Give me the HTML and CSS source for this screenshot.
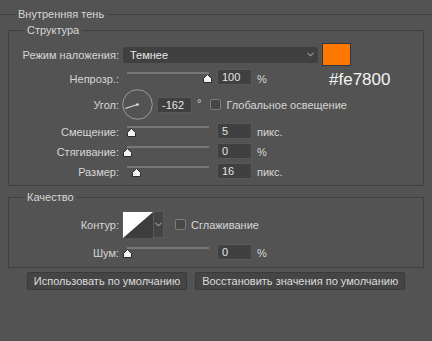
FILE: index.html
```html
<!DOCTYPE html>
<html lang="ru">
<head>
<meta charset="utf-8">
<link rel="stylesheet" href="styles.css">
</head>
<body>
<div class="panel">
  <div class="panel-title"><span>Внутренняя тень</span></div>

  <section class="group">
    <div class="group-title">Структура</div>
    <div class="rows">
      <div class="row row-tall">
        <span class="lbl">Режим наложения:</span>
        <div class="select"><span>Темнее</span>
          <svg class="chev" width="7" height="5" viewBox="0 0 7 5"><polyline points="0.5,0.8 3.5,3.8 6.5,0.8" fill="none" stroke="#9a9a9a" stroke-width="1.1"/></svg>
        </div>
        <div class="swatch"></div>
      </div>

      <div class="row">
        <span class="lbl">Непрозр.:</span>
        <div class="slider"><span class="thumb" style="left:98%"><svg width="9" height="9" viewBox="0 0 9 9"><polygon points="4.5,0.5 8.5,4.5 8.5,8.5 0.5,8.5 0.5,4.5" fill="#f2f2f2" stroke="#2a2a2a" stroke-width="1"/></svg></span></div>
        <div class="field">100</div>
        <span class="unit">%</span>
        <span class="hex">#fe7800</span>
      </div>

      <div class="row row-dial">
        <span class="lbl">Угол:</span>
        <div class="inline">
          <svg class="dial" width="31" height="31" viewBox="0 0 31 31">
            <circle cx="15.5" cy="15.5" r="14.8" fill="none" stroke="#9c9c9c" stroke-width="1"/>
            <line x1="15.5" y1="15.5" x2="3.2" y2="19.5" stroke="#dcdcdc" stroke-width="1.1"/>
            <circle cx="15.5" cy="15.5" r="1.3" fill="#e6e6e6"/>
          </svg>
          <div class="field field-gap">-162</div>
          <span class="deg">°</span>
          <span class="check"></span>
          <span class="check-label">Глобальное освещение</span>
        </div>
      </div>

      <div class="row">
        <span class="lbl">Смещение:</span>
        <div class="slider"><span class="thumb" style="left:5%"><svg width="9" height="9" viewBox="0 0 9 9"><polygon points="4.5,0.5 8.5,4.5 8.5,8.5 0.5,8.5 0.5,4.5" fill="#f2f2f2" stroke="#2a2a2a" stroke-width="1"/></svg></span></div>
        <div class="field">5</div>
        <span class="unit">пикс.</span>
      </div>

      <div class="row">
        <span class="lbl">Стягивание:</span>
        <div class="slider"><span class="thumb" style="left:0%"><svg width="9" height="9" viewBox="0 0 9 9"><polygon points="4.5,0.5 8.5,4.5 8.5,8.5 0.5,8.5 0.5,4.5" fill="#f2f2f2" stroke="#2a2a2a" stroke-width="1"/></svg></span></div>
        <div class="field">0</div>
        <span class="unit">%</span>
      </div>

      <div class="row">
        <span class="lbl">Размер:</span>
        <div class="slider"><span class="thumb" style="left:11%"><svg width="9" height="9" viewBox="0 0 9 9"><polygon points="4.5,0.5 8.5,4.5 8.5,8.5 0.5,8.5 0.5,4.5" fill="#f2f2f2" stroke="#2a2a2a" stroke-width="1"/></svg></span></div>
        <div class="field">16</div>
        <span class="unit">пикс.</span>
      </div>
    </div>
  </section>

  <section class="group group-quality">
    <div class="group-title">Качество</div>
    <div class="rows rows-quality">
      <div class="row row-contour">
        <span class="lbl">Контур:</span>
        <div class="inline">
          <div class="contour">
            <svg class="contour-img" width="30" height="26" viewBox="0 0 30 26">
              <rect width="30" height="26" fill="#3d3d3d"/>
              <polygon points="0,0 30,0 0,26" fill="#ffffff"/>
            </svg>
            <div class="contour-drop">
              <svg width="7" height="5" viewBox="0 0 7 5"><polyline points="0.5,0.8 3.5,3.8 6.5,0.8" fill="none" stroke="#9a9a9a" stroke-width="1.1"/></svg>
            </div>
          </div>
          <span class="check check-gap"></span>
          <span class="check-label">Сглаживание</span>
        </div>
      </div>

      <div class="row">
        <span class="lbl">Шум:</span>
        <div class="slider"><span class="thumb" style="left:0%"><svg width="9" height="9" viewBox="0 0 9 9"><polygon points="4.5,0.5 8.5,4.5 8.5,8.5 0.5,8.5 0.5,4.5" fill="#f2f2f2" stroke="#2a2a2a" stroke-width="1"/></svg></span></div>
        <div class="field">0</div>
        <span class="unit">%</span>
      </div>
    </div>
  </section>

  <div class="buttons">
    <button class="btn">Использовать по умолчанию</button>
    <button class="btn">Восстановить значения по умолчанию</button>
  </div>
</div>
</body>
</html>
```

FILE: styles.css
```css
html, body {
  margin: 0;
  padding: 0;
}

body {
  width: 432px;
  height: 341px;
  overflow: hidden;
  background: #535353;
  font-family: "Liberation Sans", Arial, sans-serif;
  font-size: 11px;
  color: #d6d6d6;
}

.panel-title {
  display: flex;
  align-items: center;
  height: 14px;
  margin-top: 7px;
  line-height: 14px;
}

.panel-title::before {
  content: "";
  width: 16px;
  height: 1px;
  margin-right: 2px;
  background: #404040;
}

.panel-title::after {
  content: "";
  flex: 1;
  height: 1px;
  margin-left: 3px;
  background: #404040;
}

.group {
  margin: 9px 8px 0;
  border: 1px solid #404040;
}

.group-quality {
  margin-top: 11px;
}

.group-title {
  width: max-content;
  margin: -8px 0 0 15px;
  padding: 0 3px;
  line-height: 14px;
  background: #535353;
}

.rows {
  display: flex;
  flex-direction: column;
  gap: 3px;
  margin-top: 6px;
  padding-bottom: 5px;
}

.rows-quality {
  gap: 6px;
  margin-top: 7px;
  padding-bottom: 6px;
}

.row {
  display: grid;
  grid-template-columns: 114px 94px 35px 70px 1fr;
  grid-template-rows: 1fr;
  align-items: center;
  height: 17px;
}

.row-tall {
  height: 23px;
}

.row-dial {
  height: 31px;
}

.row-contour {
  height: 27px;
}

.lbl {
  padding-right: 4px;
  text-align: right;
  white-space: nowrap;
}

.select {
  grid-column: 2 / 5;
  display: flex;
  align-items: center;
  justify-content: space-between;
  height: 16px;
  margin-right: 4px;
  padding: 0 4px 0 7px;
  box-sizing: border-box;
  background: #404040;
  border-radius: 2px;
  color: #e8e8e8;
}

.swatch {
  grid-column: 5;
  width: 29px;
  height: 23px;
  box-sizing: border-box;
  background: #fe7800;
  border: 1px solid #2c3540;
}

.hex {
  grid-column: 5;
  align-self: start;
  margin-top: 2px;
  padding-left: 7px;
  font-size: 17px;
  line-height: 17px;
  color: #f2f2f2;
}

.slider {
  position: relative;
  align-self: start;
  width: 82px;
  height: 2px;
  margin: 3px 0 0 4px;
  background: #777777;
}

.thumb {
  position: absolute;
  top: 2px;
  width: 9px;
  height: 9px;
  margin-left: -4.5px;
}

.thumb svg {
  display: block;
}

.field {
  align-self: start;
  width: 35px;
  height: 16px;
  box-sizing: border-box;
  padding-left: 4px;
  line-height: 14px;
  background: #404040;
  border: 1px solid #585858;
  color: #e4e4e4;
}

.unit {
  padding-left: 5px;
}

.inline {
  grid-column: 2 / 6;
  display: flex;
  align-items: center;
  margin-left: -1px;
}

.dial {
  display: block;
}

.inline .field-gap {
  align-self: center;
  margin-left: 4px;
}

.deg {
  margin-left: 5px;
  align-self: flex-start;
  margin-top: 8px;
}

.check {
  width: 11px;
  height: 11px;
  box-sizing: border-box;
  margin-left: 9px;
  background: #474747;
  border: 1px solid #7c7c7c;
  border-radius: 2px;
}

.check-gap {
  margin-left: 11px;
}

.check-label {
  margin-left: 5px;
  white-space: nowrap;
}

.contour {
  display: flex;
  height: 27px;
  box-sizing: border-box;
  border: 1px solid #5a5a5a;
}

.contour-img {
  display: block;
}

.contour-drop {
  display: flex;
  align-items: center;
  justify-content: center;
  width: 9px;
  background: #444444;
  border-left: 1px solid #5a5a5a;
}

.buttons {
  display: flex;
  justify-content: center;
  gap: 8px;
  margin-top: 4px;
}

.btn {
  height: 18px;
  box-sizing: border-box;
  padding: 0 6px;
  font: inherit;
  line-height: 16px;
  color: #dcdcdc;
  background: #454545;
  border: 1px solid #3a3a3a;
  border-radius: 2px;
}
```
